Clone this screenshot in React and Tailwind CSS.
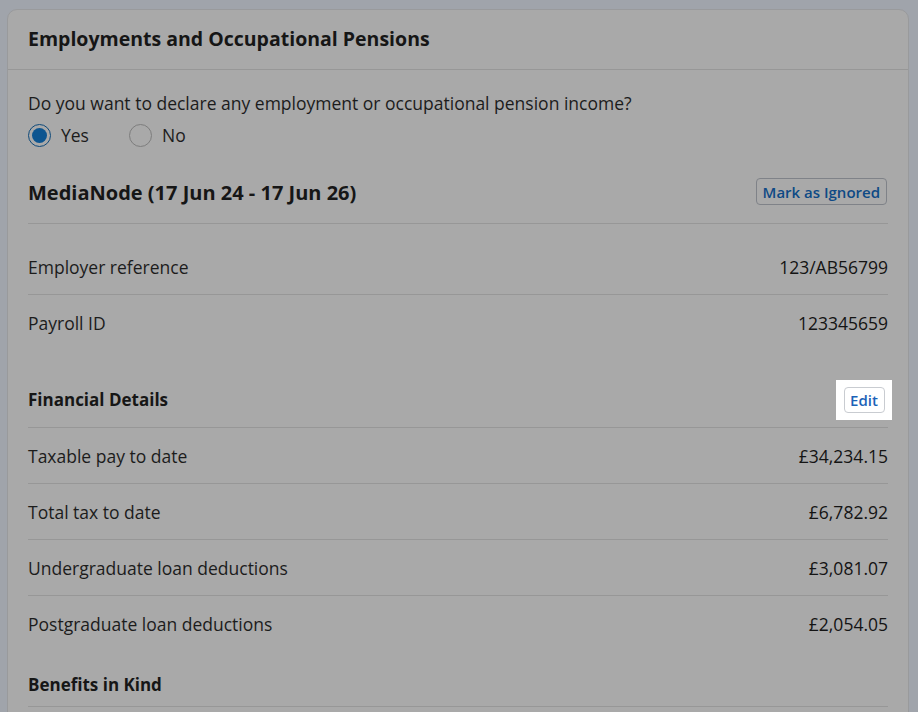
import React from "react";

const Row = ({ label, value, divider = true, extra = "" }) => (
  <div className={`flex h-[56px] items-center justify-between ${divider ? "border-b border-[#979797]" : ""} ${extra}`}>
    <span className="text-[17.5px] text-[#1c1c1c]">{label}</span>
    <span className="text-[17.5px] text-[#141414]">{value}</span>
  </div>
);

export default function App() {
  return (
    <div className="min-h-[712px] w-[918px] overflow-hidden bg-[#a0a4ab] pt-[9px] pl-[7px]" style={{ fontFamily: "'Open Sans', 'Noto Sans', sans-serif" }}>
      <div className="w-[902px] rounded-t-[10px] border border-[#999a9c] bg-[#a9a9a9] h-[720px]">
        <div className="flex h-[60px] items-center border-b border-[#979797] px-[20px] pb-[2px]">
          <h1 className="text-[19.5px] font-bold text-[#161616]">Employments and Occupational Pensions</h1>
        </div>
        <div className="px-[20px]">
          <p className="mt-[22px] text-[17.5px] leading-[22px] text-[#1c1c1c]">
            Do you want to declare any employment or occupational pension income?
          </p>
          <div className="mt-[8px] flex items-center">
            <span className="flex h-[23px] w-[23px] items-center justify-center rounded-full border border-[#0f4a7a]">
              <span className="h-[15px] w-[15px] rounded-full bg-[#0d5590]" />
            </span>
            <span className="ml-[10px] text-[17.5px] text-[#1c1c1c]">Yes</span>
            <span className="ml-[40px] h-[23px] w-[23px] rounded-full border border-[#7d7d7d]" />
            <span className="ml-[10px] text-[17.5px] text-[#1c1c1c]">No</span>
          </div>
          <div className="mt-[19px] flex h-[57px] items-center justify-between border-b border-[#979797] pb-[4px]">
            <span className="text-[20px] font-bold text-[#161616]">MediaNode (17 Jun 24 - 17 Jun 26)</span>
            <button className="mr-[1px] mb-[3px] h-[27px] rounded-[4px] border border-[#7f8288] px-[6px] text-[15px] font-semibold text-[#0e4a85]">
              Mark as Ignored
            </button>
          </div>
          <Row label="Employer reference" value="123/AB56799" extra="mt-[15px]" />
          <Row label="Payroll ID" value="123345659" divider={false} />
          <div className="mt-[21px] flex h-[56px] items-center justify-between border-b border-[#979797]">
            <span className="text-[17px] font-bold text-[#161616]">Financial Details</span>
            <div className="-mr-[4px] flex h-[40px] w-[56px] items-center justify-center bg-white">
              <button className="h-[26px] w-[41px] rounded-[4px] border border-[#c9ccd1] text-[15px] font-semibold text-[#1b63b8]">
                Edit
              </button>
            </div>
          </div>
          <Row label="Taxable pay to date" value="£34,234.15" />
          <Row label="Total tax to date" value="£6,782.92" />
          <Row label="Undergraduate loan deductions" value="£3,081.07" />
          <Row label="Postgraduate loan deductions" value="£2,054.05" divider={false} />
          <div className="mt-[11px] flex h-[44px] items-center border-b border-[#979797]">
            <span className="text-[17px] font-bold text-[#161616]">Benefits in Kind</span>
          </div>
        </div>
      </div>
    </div>
  );
}
